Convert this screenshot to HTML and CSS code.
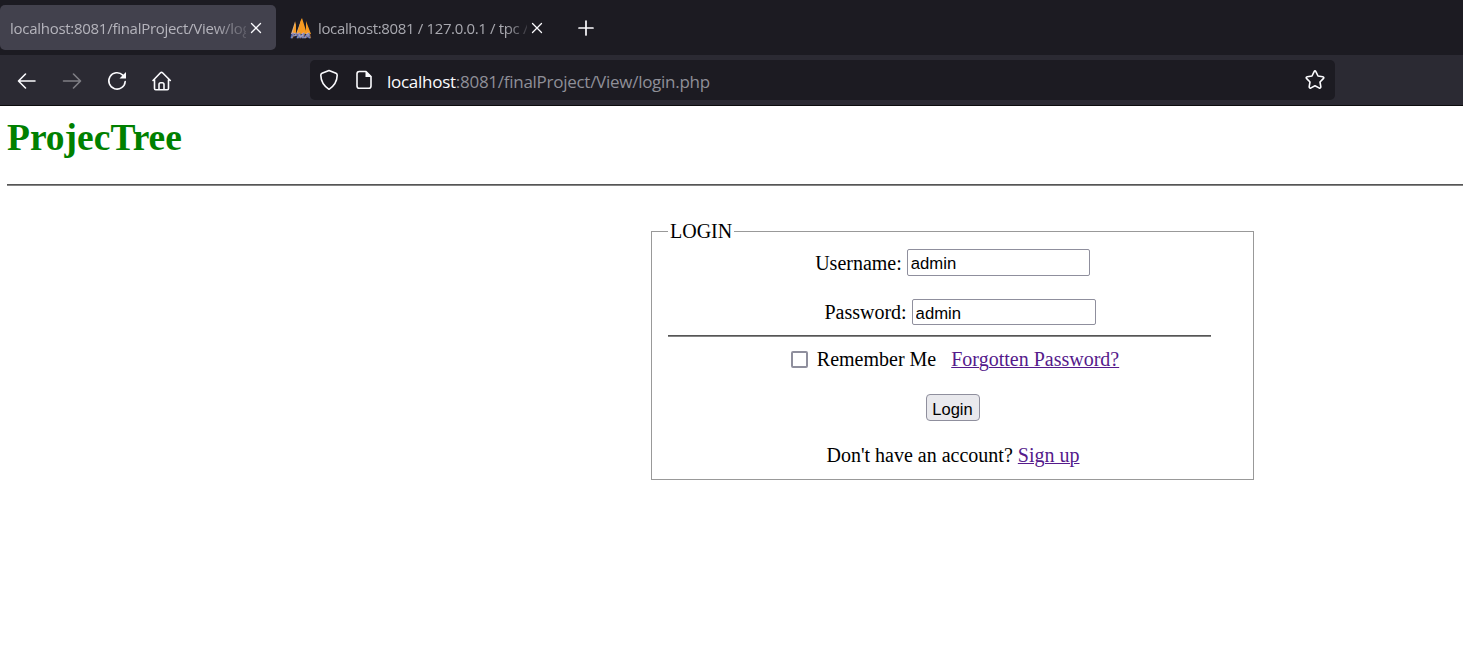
FILE: index.html
```html
<!DOCTYPE html>
<html lang="en">
<head>
<meta charset="utf-8">
<title>ProjecTree</title>
<link rel="stylesheet" href="styles.css">
</head>
<body>
<header class="browser">
  <div class="tabs">
    <div class="tab active">
      <span class="tab-title first">localhost:8081/finalProject/View/log</span>
      <svg class="close" width="12" height="12" viewBox="0 0 12 12"><path d="M1.500 1.500l9 9M10.500 1.500l-9 9"/></svg>
    </div>
    <div class="tab second-tab">
      <svg class="favicon" width="22" height="22" viewBox="0 0 22 22">
        <path fill="#d9b080" d="M5 4.500L1 17H5ZM11.500 2L6 17H10Z"/>
        <path fill="#f79a20" d="M6 4V17H2.500ZM12 1L17 17H7.500ZM11.500 1V17H7ZM16 4L21 17H16Z"/>
        <text class="pma" x="1" y="20.500" textLength="20" lengthAdjust="spacingAndGlyphs">PMA</text>
      </svg>
      <span class="tab-title">localhost:8081 / 127.0.0.1 / tpc /</span>
      <svg class="close" width="12" height="12" viewBox="0 0 12 12"><path d="M1.500 1.500l9 9M10.500 1.500l-9 9"/></svg>
    </div>
    <svg class="plus" width="16" height="16" viewBox="0 0 16 16"><path d="M8 1v14M1 8h14"/></svg>
  </div>
  <div class="toolbar">
    <nav class="nav">
      <svg width="20" height="20" viewBox="0 0 20 20"><path d="M18 10H2M8.500 3L1.500 10L8.500 17"/></svg>
      <svg class="disabled" width="20" height="20" viewBox="0 0 20 20"><path d="M1.500 10h16.500M11.500 3l7 7l-7 7"/></svg>
      <svg width="20" height="20" viewBox="0 0 20 20"><path d="M15.800 4.100A8.200 8.200 0 1 0 18.200 10.500"/><path class="solid" d="M19 1v6.500h-6.500z"/></svg>
      <svg width="20" height="20" viewBox="0 0 20 20"><path d="M1 9.500L8.500 1.800q1-1 2 0l7.800 7.700M2.500 8.500v9q0 1.200 1.200 1.200h11.600q1.200 0 1.200-1.200v-9M7 18.500v-5q0-1.700 1.700-1.700h1.600q1.700 0 1.700 1.700v5"/></svg>
    </nav>
    <div class="address">
      <svg class="shield" width="20" height="22" viewBox="0 0 20 22"><path d="M10 1.500L17 4.300Q18.200 4.800 18.200 6.200Q18 15 10 20.300Q2 15 1.800 6.200Q1.800 4.800 3 4.300Z"/></svg>
      <svg class="page-icon" width="18" height="20" viewBox="0 0 18 20"><path d="M11 1.500H4.300Q2 1.500 2 3.800V16Q2 18.300 4.300 18.300H13.700Q16 18.300 16 16V6.500Z"/><path class="solid" d="M10.500 1v6H16.500z"/></svg>
      <span class="url"><b>localhost</b>:8081/finalProject/View/login.php</span>
      <svg class="star" width="22" height="22" viewBox="0 0 22 22"><path d="M10 2.800Q11 1 12 2.800L14 7L18.700 7.700Q20.600 8.200 19.300 9.600L16 13L16.800 17.600Q16.900 19.600 15 18.900L11 16.800L7 18.900Q5.100 19.600 5.200 17.600L6 13L2.700 9.600Q1.400 8.200 3.300 7.700L8 7Z"/></svg>
    </div>
  </div>
</header>
<main class="page">
  <h1 class="brand">ProjecTree</h1>
  <hr class="rule">
  <form class="login">
    <fieldset class="box">
      <legend class="legend">LOGIN</legend>
      <div class="row user"><label for="u">Username:</label><input class="field" id="u" type="text" value="admin"></div>
      <div class="row pass"><label for="p">Password:</label><input class="field low" id="p" type="text" value="admin"></div>
      <hr class="rule inner">
      <div class="row remember"><input class="check" id="r" type="checkbox"><label for="r">Remember Me</label><a class="link" href="#">Forgotten Password?</a></div>
      <div class="row submit"><button class="button" type="button">Login</button></div>
      <div class="row signup"><span>Don't have an account?</span><a class="link" href="#">Sign up</a></div>
    </fieldset>
  </form>
</main>
</body>
</html>
```
FILE: styles.css
```css
* { box-sizing: border-box; }
body { margin: 0; background: #fff; color: #000; overflow: hidden; font: 20px/24px "Liberation Serif", serif; }
svg { display: block; flex: none; fill: none; stroke: #fbfbfe; stroke-width: 1.6; stroke-linecap: round; stroke-linejoin: round; }
.solid { fill: #fbfbfe; stroke: none; }

.browser { height: 106px; background: #2b2a33; border-bottom: 1px solid #0c0c0d; font-family: "Open Sans", sans-serif; }
.tabs { display: flex; align-items: center; height: 55px; background: #1c1b22; }
.tab { display: flex; align-items: center; height: 45px; }
.active { width: 276px; padding-left: 10px; border-radius: 5px; background: #42414d; }
.second-tab { padding-left: 14px; }
.tab-title { width: 209px; white-space: pre; font-size: 15px; line-height: 24px; letter-spacing: -.35px; color: #a9a9b0; -webkit-mask-image: linear-gradient(to right, #000 90%, transparent 103%); mask-image: linear-gradient(to right, #000 90%, transparent 103%); }
.first { width: 236px; color: #b5b4bc; letter-spacing: -.28px; -webkit-mask-image: linear-gradient(to right, #000 86%, transparent 104%); mask-image: linear-gradient(to right, #000 86%, transparent 104%); }
.close { margin-left: 4px; stroke-width: 1.3; }
.favicon { margin-right: 6px; stroke: none; }
.pma { font: italic bold 8px "Liberation Sans", sans-serif; fill: #42427c; stroke: #b7b7db; stroke-width: .5; }
.plus { margin-left: 35px; stroke-width: 1.7; }
.toolbar { display: flex; align-items: center; height: 50px; }
.nav { display: flex; gap: 25px; width: 310px; padding: 2px 0 0 17px; }
.disabled { opacity: .4; }
.address { display: flex; align-items: center; width: 1025px; height: 40px; padding: 0 9px; border-radius: 5px; background: #1c1b22; }
.page-icon { margin-left: 16px; }
.url { margin-left: 14px; padding-top: 3px; white-space: pre; color: #8f8f98; font-size: 17px; line-height: 24px; letter-spacing: -.27px; }
.url b { color: #fbfbfe; font-weight: 400; }
.star { margin-left: auto; }

.page { padding-left: 7px; }
.brand { margin: 0; padding-top: 10px; height: 78px; font-size: 37.500px; line-height: 44px; color: #008000; }
.rule { margin: 0; height: 2px; border: 0; border-top: 1px solid #555; background: #858585; }
.login { padding: 35px 0 0 644px; }
.box { width: 603px; height: 259px; margin: 0; padding: 0 15px 0 16px; border: 1px solid #999; }
.legend { padding: 0 2px; line-height: 20px; }
.row { display: flex; justify-content: center; align-items: center; white-space: pre; }
.field { width: 183px; height: 27px; margin: 0 0 0 5px; padding: 2px 3px 0; border: 1px solid #8f8f9d; border-radius: 2px; background: #fff; color: #000; font: 16.700px "Liberation Sans", sans-serif; }
.low { width: 184px; height: 26px; padding-top: 3px; }
.user { padding: 8px 1px 0 0; }
.pass { padding: 23px 0 10px 14px; }
.inner { width: 543px; }
.remember { padding: 10px 0 1px 4px; }
.check { appearance: none; width: 17px; height: 17px; margin: 0 9px 0 0; border: 2px solid #8f8f9d; border-radius: 2px; background: #fff; }
.remember .link { margin-left: 15px; }
.link { color: #551a8b; text-decoration: underline; text-decoration-thickness: 1px; }
.submit { padding: 22px 1px 0 0; }
.button { width: 54px; height: 27px; padding: 3px 0 0; border: 1px solid #8f8f9d; border-radius: 4px; background: #e9e9ed; color: #000; font: 16.500px "Liberation Sans", sans-serif; }
.signup { gap: 5px; padding-top: 22px; }
```
